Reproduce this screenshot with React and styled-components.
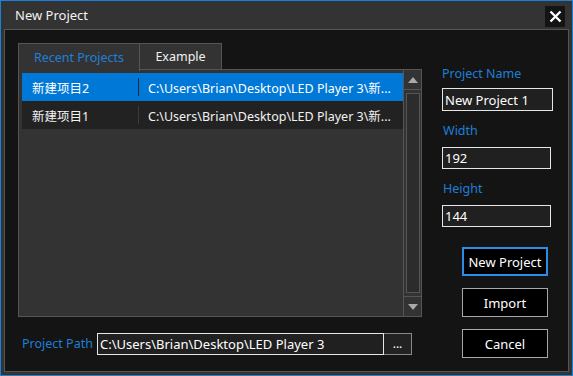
import React from 'react';
import styled, { createGlobalStyle } from 'styled-components';

const Colors = {
  frame: '#333333',
  panel: '#141414',
  line: '#555555',
  blue: '#0078d7',
  label: '#1f7fd8',
  text: '#f2f2f2',
};

const GlobalStyle = createGlobalStyle`
  html, body { margin: 0; padding: 0; background: #333; }
  body { font-family: "Noto Sans", "Noto Sans CJK SC", sans-serif; font-size: 12.5px; }
`;

const Window = styled.div`
  width: 573px;
  height: 376px;
  box-sizing: border-box;
  border: 1px solid #1b80d8;
  background: ${Colors.frame};
  display: flex;
  flex-direction: column;
`;

const TitleBar = styled.div`
  height: 28px;
  display: flex;
  align-items: center;
  justify-content: space-between;
  padding: 0 7px 0 14px;
  color: ${Colors.text};
  font-size: 13px;
`;

const CloseButton = styled.button`
  width: 20px;
  height: 21px;
  margin-top: 2px;
  border: none;
  padding: 0;
  background: ${Colors.panel};
  display: flex;
  align-items: center;
  justify-content: center;
`;

const Body = styled.div`
  flex: 1;
  margin: 0 3px 3px 3px;
  border: 1px solid ${Colors.line};
  background: ${Colors.panel};
  display: flex;
  padding: 13px 0 0 13px;
`;

const LeftColumn = styled.div`
  width: 404px;
  display: flex;
  flex-direction: column;
`;

const TabBar = styled.div`
  display: flex;
  height: 27px;
`;

const Tab = styled.div`
  box-sizing: border-box;
  height: ${p => (p.active ? 28 : 27)}px;
  width: ${p => p.width}px;
  margin-left: ${p => (p.first ? 0 : -1)}px;
  border: 1px solid ${Colors.line};
  border-bottom: ${p => (p.active ? 'none' : `1px solid ${Colors.line}`)};
  background: ${Colors.frame};
  color: ${p => (p.active ? Colors.label : Colors.text)};
  display: flex;
  align-items: center;
  justify-content: center;
  padding-bottom: ${p => (p.active ? 1 : 0)}px;
  position: relative;
  z-index: ${p => (p.active ? 1 : 0)};
`;

const TabFiller = styled.div`
  flex: 1;
  margin-left: -1px;
  border-bottom: 1px solid ${Colors.line};
`;

const TabPage = styled.div`
  height: 247px;
  box-sizing: border-box;
  border: 1px solid ${Colors.line};
  border-top: none;
  background: ${Colors.frame};
  display: flex;
`;

const ListArea = styled.div`
  flex: 1;
  padding: 3px 0 0 3px;
`;

const Row = styled.div`
  height: 28px;
  display: flex;
  align-items: center;
  background: ${p => (p.selected ? Colors.blue : '#222222')};
  color: ${p => (p.selected ? '#ffffff' : Colors.text)};
  white-space: nowrap;
  overflow: hidden;
`;

const NameCell = styled.div`
  width: 106px;
  padding-left: 10px;
`;

const CellDivider = styled.div`
  width: 1px;
  height: 18px;
  background: ${p => (p.selected ? '#1d2a36' : '#3c3c3c')};
`;

const PathCell = styled.div`
  padding-left: 9px;
`;

const ScrollBar = styled.div`
  width: 17px;
  border-left: 1px solid ${Colors.line};
  display: flex;
  flex-direction: column;
`;

const ScrollArrow = styled.div`
  height: 19px;
  display: flex;
  align-items: center;
  justify-content: center;
  border-${p => (p.down ? 'top' : 'bottom')}: 1px solid ${Colors.line};
`;

const ScrollTrack = styled.div`
  flex: 1;
  padding: 3px 1px 3px 2px;
  display: flex;
`;

const ScrollThumb = styled.div`
  flex: 1;
  border: 1px solid ${Colors.line};
  background: #2c2c2c;
`;

const PathRow = styled.div`
  display: flex;
  align-items: center;
  margin-top: 16px;
  padding-left: 4px;
`;

const Label = styled.div`
  color: ${Colors.label};
  line-height: 18px;
  width: ${p => (p.width ? `${p.width}px` : 'auto')};
  flex-shrink: 0;
  margin: ${p => p.margin || '0'};
`;

const TextBox = styled.div`
  box-sizing: border-box;
  width: ${p => p.width}px;
  height: ${p => p.height || 22}px;
  border: 1px solid #e6e6e6;
  background: #202020;
  color: #ffffff;
  font-size: 13px;
  display: flex;
  align-items: center;
  padding-left: 2px;
  white-space: nowrap;
`;

const BrowseButton = styled.div`
  box-sizing: border-box;
  width: 28px;
  height: 22px;
  border: 1px solid #8a8a8a;
  border-left: none;
  background: #222;
  color: #fff;
  display: flex;
  align-items: center;
  justify-content: center;
  font-size: 12px;
  padding-bottom: 2px;
`;

const RightColumn = styled.div`
  margin-left: 20px;
  padding-top: 22px;
  display: flex;
  flex-direction: column;
`;

const ButtonStack = styled.div`
  margin: 20px 0 0 20px;
  display: flex;
  flex-direction: column;
  gap: 12px;
`;

const DialogButton = styled.button`
  box-sizing: border-box;
  width: 86px;
  height: 29px;
  background: #000;
  color: #fff;
  font-family: inherit;
  font-size: 13px;
  padding: 0;
  border: ${p => (p.primary ? '2px solid #2f8be8' : '1px solid #a8a8a8')};
`;

const Triangle = ({ down }) => (
  <svg width="10" height="6" viewBox="0 0 10 6">
    <path d={down ? 'M0 0 L10 0 L5 6 Z' : 'M0 6 L10 6 L5 0 Z'} fill="#a9a9a9" />
  </svg>
);

const projects = [
  { name: '新建项目2', path: 'C:\\Users\\Brian\\Desktop\\LED Player 3\\新...' },
  { name: '新建项目1', path: 'C:\\Users\\Brian\\Desktop\\LED Player 3\\新...' },
];

export default function App() {
  return (
    <>
      <GlobalStyle />
      <Window>
        <TitleBar>
          <span>New Project</span>
          <CloseButton>
            <svg width="13" height="13" viewBox="0 0 13 13">
              <path d="M1.5 1.5 L11.5 11.5 M11.5 1.5 L1.5 11.5" stroke="#fff" strokeWidth="2.4" />
            </svg>
          </CloseButton>
        </TitleBar>
        <Body>
          <LeftColumn>
            <TabBar>
              <Tab first active width={122}>Recent Projects</Tab>
              <Tab width={83}>Example</Tab>
              <TabFiller />
            </TabBar>
            <TabPage>
              <ListArea>
                {projects.map((p, i) => (
                  <Row key={p.name} selected={i === 0}>
                    <NameCell>{p.name}</NameCell>
                    <CellDivider selected={i === 0} />
                    <PathCell>{p.path}</PathCell>
                  </Row>
                ))}
              </ListArea>
              <ScrollBar>
                <ScrollArrow><Triangle /></ScrollArrow>
                <ScrollTrack><ScrollThumb /></ScrollTrack>
                <ScrollArrow down><Triangle down /></ScrollArrow>
              </ScrollBar>
            </TabPage>
            <PathRow>
              <Label width={75}>Project Path</Label>
              <TextBox width={287}>C:\Users\Brian\Desktop\LED Player 3</TextBox>
              <BrowseButton>...</BrowseButton>
            </PathRow>
          </LeftColumn>
          <RightColumn>
            <Label margin="0 0 5px 0">Project Name</Label>
            <TextBox width={111} height={23}>New Project 1</TextBox>
            <Label margin="11px 0 7px 1px">Width</Label>
            <TextBox width={109}>192</TextBox>
            <Label margin="11px 0 7px 1px">Height</Label>
            <TextBox width={109}>144</TextBox>
            <ButtonStack>
              <DialogButton primary>New Project</DialogButton>
              <DialogButton>Import</DialogButton>
              <DialogButton>Cancel</DialogButton>
            </ButtonStack>
          </RightColumn>
        </Body>
      </Window>
    </>
  );
}
